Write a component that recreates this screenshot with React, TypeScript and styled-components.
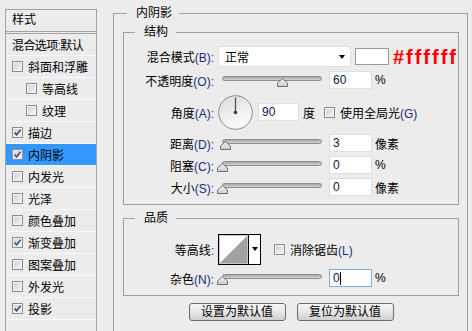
import React from "react";
import styled, { createGlobalStyle } from "styled-components";

const GlobalStyle = createGlobalStyle`
  html, body {
    margin: 0;
    padding: 0;
  }
  body {
    background: #ececec;
    font-family: "Liberation Sans", "Noto Sans CJK SC", sans-serif;
    font-size: 12px;
    color: #000;
  }
`;

const Page = styled.div`
  display: flex;
  width: 472px;
  height: 331px;
  overflow: hidden;
  background: #ececec;
`;

/* ---------- left list ---------- */

const Sidebar = styled.aside`
  display: flex;
  flex-direction: column;
  flex: none;
  width: 92px;
  box-sizing: border-box;
  margin: 9px 0 0 5px;
  border: 1px solid #a3a3a3;
  border-bottom: none;
`;

const SideHeader = styled.div`
  height: 21px;
  line-height: 21px;
  padding-left: 6px;
  border-bottom: 3px double #a3a3a3;
`;

const SideRow = styled.div<{ $indent?: boolean; $active?: boolean; $tight?: boolean }>`
  display: flex;
  align-items: center;
  gap: 5px;
  height: 21px;
  padding-left: ${(p) => (p.$indent ? 20 : 6)}px;
  border-bottom: 1px solid #f9f9f9;
  background: ${(p) => (p.$active ? "#3399ff" : "transparent")};
  letter-spacing: ${(p) => (p.$tight ? "-0.6px" : "0")};
  white-space: nowrap;
  overflow: hidden;
`;

const Key = styled.span`
  color: #1b2d78;
`;

const Box = styled.span`
  display: inline-flex;
  align-items: center;
  justify-content: center;
  flex: none;
  width: 11px;
  height: 11px;
  box-sizing: border-box;
  border: 1px solid #8e8e8e;
  background: linear-gradient(135deg, #cfcfcf, #f8f8f8);
  box-shadow: inset 0 0 0 1px #f2f2f2;
`;

const Checkbox = ({ checked }: { checked?: boolean }) => (
  <Box>
    {checked && (
      <svg width="9" height="9" viewBox="0 0 9 9">
        <path d="M1.5 4.5 L3.6 6.8 L7.6 1.8" fill="none" stroke="#3a4b8c" strokeWidth="1.6" />
      </svg>
    )}
  </Box>
);

/* ---------- group boxes ---------- */

const Group = styled.fieldset`
  margin: 0;
  min-width: 0;
  border: 1px solid #a0a0a0;
`;

const OuterGroup = styled(Group)`
  flex: none;
  width: 355px;
  box-sizing: border-box;
  margin: 6px 0 0 16px;
  padding: 4px 8px 0 9px;
  border-bottom: none;
`;

const InnerGroup = styled(Group)<{ $gap?: number }>`
  margin-top: ${(p) => p.$gap ?? 0}px;
  padding: ${(p) => (p.$gap ? "6px 0 5px" : "5px 0 6px")};
`;

const Legend = styled.legend<{ $offset: number; $right: number }>`
  margin-left: ${(p) => p.$offset}px;
  padding: 0 ${(p) => p.$right}px 0 9px;
  height: 15px;
  line-height: 15px;
`;

/* ---------- form rows ---------- */

const Row = styled.div<{ $h: number }>`
  display: flex;
  align-items: center;
  height: ${(p) => p.$h}px;
  white-space: nowrap;
`;

const Label = styled.span`
  flex: none;
  width: 90px;
  margin-right: 4px;
  text-align: right;
`;

const Select = styled.div`
  display: flex;
  align-items: center;
  justify-content: space-between;
  width: 133px;
  height: 21px;
  box-sizing: border-box;
  padding: 0 5px 0 6px;
  background: #fff;
  border: 1px solid #e0e0e0;
  border-radius: 2px;
`;

const Arrow = styled.span`
  width: 0;
  height: 0;
  border-left: 3.5px solid transparent;
  border-right: 3.5px solid transparent;
  border-top: 4px solid #000;
`;

const Swatch = styled.span`
  width: 34px;
  height: 17px;
  box-sizing: border-box;
  margin-left: 4px;
  background: #fff;
  border: 1px solid #9a9a9a;
`;

const Hex = styled.span`
  margin-left: 4px;
  color: #ff0000;
  font-family: "Liberation Sans", Arial, sans-serif;
  font-weight: bold;
  font-size: 20px;
  letter-spacing: 2px;
  line-height: 20px;
`;

const SliderWrap = styled.div`
  position: relative;
  flex: none;
  width: 104px;
  height: 14px;
`;

const Track = styled.div`
  position: absolute;
  left: 4px;
  top: 3px;
  width: 100px;
  height: 5px;
  box-sizing: border-box;
  border: 1px solid #8e8e8e;
  border-radius: 3px;
  background: linear-gradient(#a6a6a6, #d6d6d6);
`;

const Thumb = styled.svg`
  position: absolute;
  top: 5px;
`;

const Slider = ({ value }: { value: number }) => (
  <SliderWrap>
    <Track />
    <Thumb width="11" height="9" viewBox="0 0 11 9" style={{ left: value - 1 }}>
      <defs>
        <linearGradient id="thumbFill" x1="0" y1="0" x2="0" y2="1">
          <stop offset="0" stopColor="#f4f4f4" />
          <stop offset="1" stopColor="#cbcbcb" />
        </linearGradient>
      </defs>
      <path d="M5.5 0.5 L10.5 5 L10.5 8.5 L0.5 8.5 L0.5 5 Z" fill="url(#thumbFill)" stroke="#6e6e6e" />
    </Thumb>
  </SliderWrap>
);

const Input = styled.div<{ $w?: number; $focus?: boolean; $gap?: number }>`
  display: flex;
  align-items: center;
  flex: none;
  width: ${(p) => p.$w ?? 43}px;
  height: 18px;
  box-sizing: border-box;
  margin-left: ${(p) => p.$gap ?? 7}px;
  padding-left: 3px;
  background: #fff;
  border: 1px solid ${(p) => (p.$focus ? "#7fb0e0" : "#dedede")};
  color: #0d1650;
  font-size: 12px;
`;

const Caret = styled.span`
  width: 1px;
  height: 13px;
  background: #000;
`;

const Unit = styled.span<{ $gap?: number }>`
  margin-left: ${(p) => p.$gap ?? 3}px;
`;

const Spaced = styled.span<{ $gap: number }>`
  display: inline-flex;
  align-items: center;
  margin-left: ${(p) => p.$gap}px;
`;

const CheckText = styled.span`
  margin-left: 5px;
`;

const Dial = () => (
  <svg width="35" height="35" viewBox="0 0 35 35">
    <defs>
      <linearGradient id="dialFill" x1="0" y1="0" x2="0.4" y2="1">
        <stop offset="0" stopColor="#dcdcdc" />
        <stop offset="1" stopColor="#fbfbfb" />
      </linearGradient>
    </defs>
    <circle cx="17.5" cy="17.5" r="16.8" fill="url(#dialFill)" stroke="#8a8a8a" />
    <line x1="17.5" y1="2.5" x2="17.5" y2="17.5" stroke="#505050" strokeWidth="1.3" />
    <circle cx="17.5" cy="17.5" r="1.8" fill="#3c3c3c" />
  </svg>
);

const ContourBox = styled.div`
  display: flex;
  flex: none;
  width: 43px;
  height: 31px;
  box-sizing: border-box;
  border: 1px solid #000;
  background: #fff;
`;

const ContourArrow = styled.div`
  display: flex;
  align-items: center;
  justify-content: center;
  flex: 1;
  border-left: 1px solid #000;
`;

const ButtonBar = styled.div`
  display: flex;
  justify-content: center;
  gap: 11px;
  margin-top: 7px;
`;

const Button = styled.button`
  width: 97px;
  height: 18px;
  padding: 0;
  font: inherit;
  font-size: 12px;
  line-height: 16px;
  color: #000;
  border: 1px solid #6c6c6c;
  border-radius: 3px;
  background: linear-gradient(#f8f8f8, #e6e6e6 50%, #d0d0d0);
`;

const styles = [
  { label: "斜面和浮雕" },
  { label: "等高线", indent: true },
  { label: "纹理", indent: true },
  { label: "描边", checked: true },
  { label: "内阴影", checked: true, active: true },
  { label: "内发光" },
  { label: "光泽" },
  { label: "颜色叠加" },
  { label: "渐变叠加", checked: true },
  { label: "图案叠加" },
  { label: "外发光" },
  { label: "投影", checked: true },
];

const sliders = [
  { label: "距离", key: "(D):", value: 3, unit: "像素" },
  { label: "阻塞", key: "(C):", value: 0, unit: "%" },
  { label: "大小", key: "(S):", value: 0, unit: "像素" },
];

export default function App() {
  return (
    <Page>
      <GlobalStyle />
      <Sidebar>
        <SideHeader>样式</SideHeader>
        <SideRow $tight>
          <span>
            混合选项<Key>:</Key>默认
          </span>
        </SideRow>
        {styles.map((s) => (
          <SideRow key={s.label} $indent={s.indent} $active={s.active}>
            <Checkbox checked={s.checked} />
            {s.label}
          </SideRow>
        ))}
      </Sidebar>

      <OuterGroup>
        <Legend $offset={4} $right={7}>内阴影</Legend>

        <InnerGroup>
          <Legend $offset={11} $right={8}>结构</Legend>
          <Row $h={23}>
            <Label>混合模式<Key>(B):</Key></Label>
            <Select>
              正常
              <Arrow />
            </Select>
            <Swatch />
            <Hex>#ffffff</Hex>
          </Row>
          <Row $h={24}>
            <Label>不透明度<Key>(O):</Key></Label>
            <Slider value={60} />
            <Input>60</Input>
            <Unit>%</Unit>
          </Row>
          <Row $h={40}>
            <Label>角度<Key>(A):</Key></Label>
            <Dial />
            <Input $w={41} $gap={5}>90</Input>
            <Unit $gap={4}>度</Unit>
            <Spaced $gap={9}>
              <Checkbox />
              <CheckText>使用全局光<Key>(G)</Key></CheckText>
            </Spaced>
          </Row>
          {sliders.map((s) => (
            <Row $h={22} key={s.label}>
              <Label>{s.label}<Key>{s.key}</Key></Label>
              <Slider value={s.value} />
              <Input>{s.value}</Input>
              <Unit>{s.unit}</Unit>
            </Row>
          ))}
        </InnerGroup>

        <InnerGroup $gap={6}>
          <Legend $offset={11} $right={8}>品质</Legend>
          <Row $h={34}>
            <Label>等高线<Key>:</Key></Label>
            <ContourBox>
              <svg width="29" height="29" viewBox="0 0 29 29">
                <rect x="0.5" y="0.5" width="28" height="28" fill="#fff" stroke="#c8c8c8" />
                <path d="M1 28 L28 1 L28 28 Z" fill="#a2a2a2" />
              </svg>
              <ContourArrow>
                <Arrow />
              </ContourArrow>
            </ContourBox>
            <Spaced $gap={13}>
              <Checkbox />
              <CheckText>消除锯齿<Key>(L)</Key></CheckText>
            </Spaced>
          </Row>
          <Row $h={24}>
            <Label>杂色<Key>(N):</Key></Label>
            <Slider value={0} />
            <Input $focus>
              0<Caret />
            </Input>
            <Unit>%</Unit>
          </Row>
        </InnerGroup>

        <ButtonBar>
          <Button>设置为默认值</Button>
          <Button>复位为默认值</Button>
        </ButtonBar>
      </OuterGroup>
    </Page>
  );
}
